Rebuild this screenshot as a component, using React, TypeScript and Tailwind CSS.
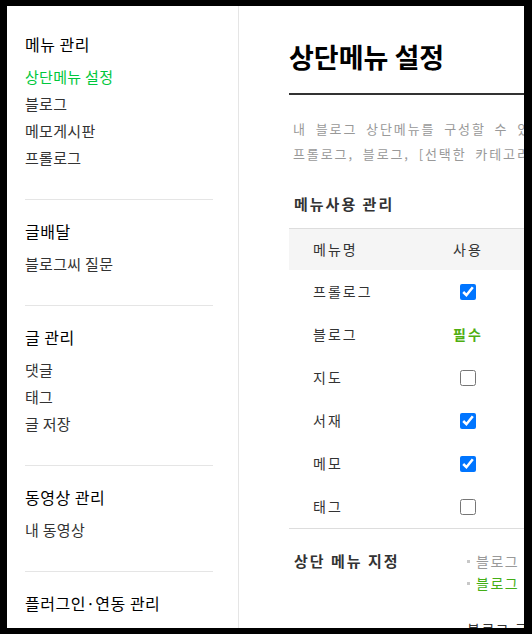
const font = { fontFamily: '"Noto Sans CJK KR", "Noto Sans", sans-serif' };

type NavSection = { title: string; items: { label: string; active?: boolean }[] };

const sections: NavSection[] = [
  {
    title: '메뉴 관리',
    items: [{ label: '상단메뉴 설정', active: true }, { label: '블로그' }, { label: '메모게시판' }, { label: '프롤로그' }],
  },
  { title: '글배달', items: [{ label: '블로그씨 질문' }] },
  { title: '글 관리', items: [{ label: '댓글' }, { label: '태그' }, { label: '글 저장' }] },
  { title: '동영상 관리', items: [{ label: '내 동영상' }] },
  { title: '플러그인·연동 관리', items: [] },
];

type MenuRow = { name: string; use: 'on' | 'off' | 'required' };

const rows: MenuRow[] = [
  { name: '프롤로그', use: 'on' },
  { name: '블로그', use: 'required' },
  { name: '지도', use: 'off' },
  { name: '서재', use: 'on' },
  { name: '메모', use: 'on' },
  { name: '태그', use: 'off' },
];

function Sidebar() {
  return (
    <aside className="w-[232px] shrink-0 border-r border-[#e5e5e5] pl-[18px] pr-[25px]">
      {sections.map((s, i) => (
        <div
          key={s.title}
          className={`${i === 0 ? 'pt-[28px]' : 'pt-[21px]'} ${
            i < sections.length - 1 ? 'border-b border-[#e5e5e5] pb-[28px]' : ''
          }`}
        >
          <h3 className="text-[16px] leading-[20px] tracking-[0.5px] text-black">{s.title}</h3>
          {s.items.length > 0 && (
            <ul className="mt-[9px]">
              {s.items.map((it) => (
                <li
                  key={it.label}
                  className={`text-[15px] leading-[27px] tracking-[0.3px] ${
                    it.active ? 'text-[#00c73c]' : 'text-[#333]'
                  }`}
                >
                  {it.label}
                </li>
              ))}
            </ul>
          )}
        </div>
      ))}
    </aside>
  );
}

function UseCell({ use }: { use: MenuRow['use'] }) {
  if (use === 'required') {
    return <span className="text-[14px] font-bold tracking-[2px] text-[#4fae10]">필수</span>;
  }
  return <input type="checkbox" readOnly checked={use === 'on'} className="m-0 block h-4 w-4" />;
}

function MenuTable() {
  return (
    <div className="mt-[14px] border-y border-[#dddddd]">
      <div className="flex h-[41px] items-center bg-[#f5f5f5] text-[14px] tracking-[2px] text-[#333]">
        <div className="w-[130px] pl-6">메뉴명</div>
        <div className="flex w-[98px] justify-center">사용</div>
      </div>
      {rows.map((r) => (
        <div key={r.name} className="flex h-[43px] items-center text-[14px] tracking-[2px] text-[#333]">
          <div className="w-[130px] pl-6">{r.name}</div>
          <div className="flex w-[98px] justify-center">
            <UseCell use={r.use} />
          </div>
        </div>
      ))}
    </div>
  );
}

function Bullet({ children, className = '' }: { children: React.ReactNode; className?: string }) {
  return (
    <li className={`flex items-center text-[14px] leading-[22px] tracking-[1.5px] ${className}`}>
      <span className="mr-[6px] h-[3px] w-[3px] bg-[#c8c8c8]" />
      {children}
    </li>
  );
}

export default function App() {
  return (
    <div className="h-[634px] w-[532px] overflow-hidden bg-black pl-[7px] pt-[6px]" style={font}>
      <div className="flex h-[622px] w-[517px] overflow-hidden bg-white">
        <Sidebar />
        <main className="w-[680px] shrink-0 pl-[50px]">
          <h1 className="border-b-2 border-[#333] pb-[19px] pt-[34px] text-[27px] font-bold leading-[34px] text-black">
            상단메뉴 설정
          </h1>
          <p className="mt-[21px] whitespace-nowrap pl-[4px] text-[13px] leading-[25px] tracking-[1.9px] text-[#999] [word-spacing:4px]">
            내 블로그 상단메뉴를 구성할 수 있습니다. 최대 4개까지 노출됩니다.
            <br />
            프롤로그, 블로그, [선택한 카테고리], 지도, 서재, 메모, 태그 중 선택하세요.
          </p>
          <h2 className="mt-[28px] pl-[5px] text-[15px] font-bold leading-[20px] tracking-[2px] text-[#333]">
            메뉴사용 관리
          </h2>
          <MenuTable />
          <div className="mt-[21px] flex">
            <div className="w-[178px] shrink-0 pl-[5px] text-[15px] font-bold leading-[22px] tracking-[2px] text-[#333]">
              상단 메뉴 지정
            </div>
            <div>
              <ul>
                <Bullet className="text-[#999]">블로그</Bullet>
                <Bullet className="text-[#44ae16]">블로그</Bullet>
              </ul>
              <div className="mt-[24px] text-[14px] leading-[22px] tracking-[1.5px] text-[#333]">블로그 글</div>
            </div>
          </div>
        </main>
      </div>
    </div>
  );
}
